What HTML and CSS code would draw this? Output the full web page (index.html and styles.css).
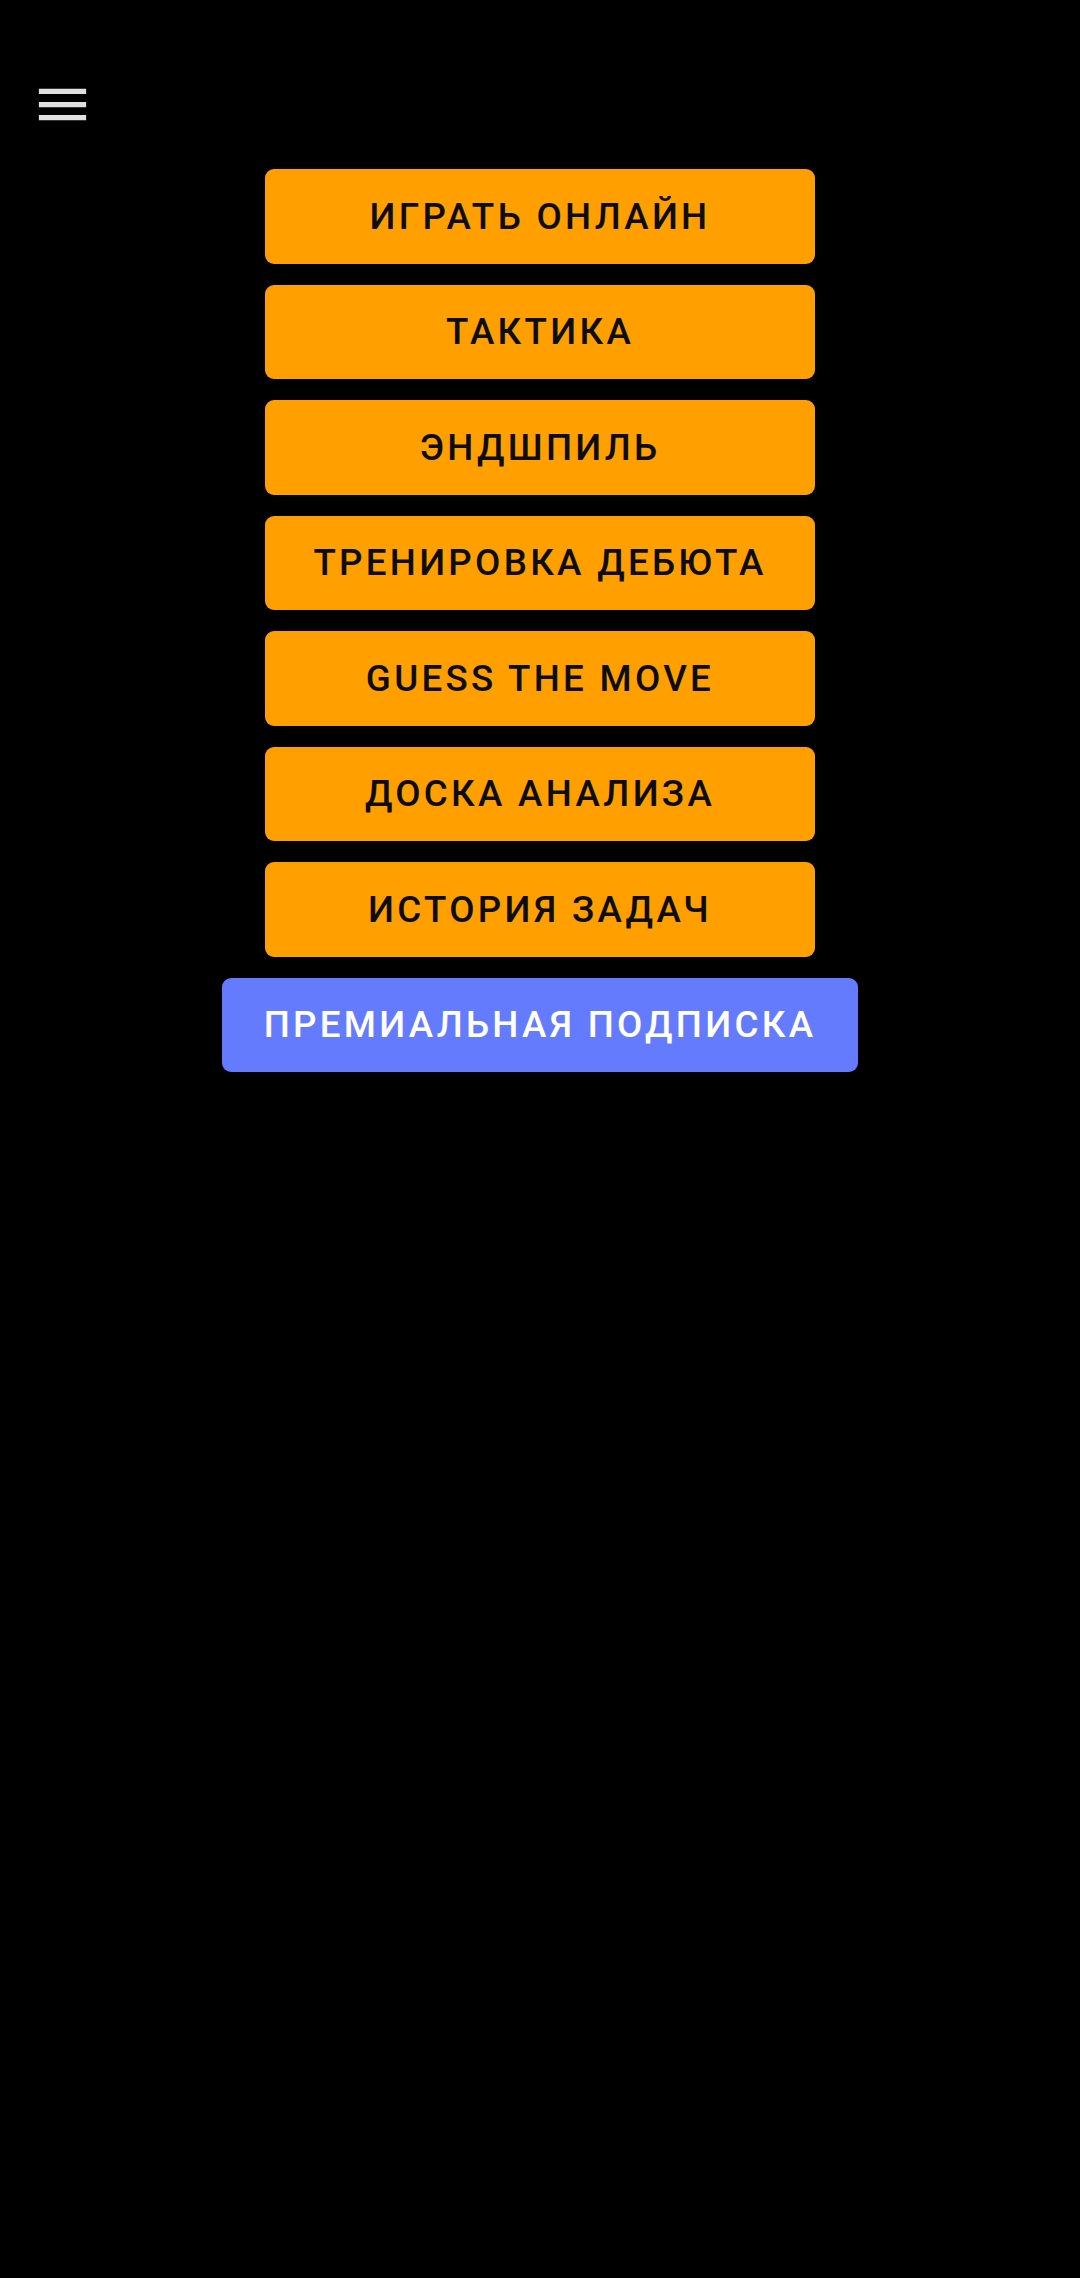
FILE: index.html
```html
<!DOCTYPE html>
<html lang="ru">
<head>
    <meta charset="UTF-8">
    <meta name="viewport" content="width=device-width, initial-scale=1.0">
    <title>Меню</title>
    <link rel="stylesheet" href="styles.css">
</head>
<body>
    <div class="header">
        <svg class="menu-icon" viewBox="0 0 24 24" width="63" height="63">
            <path d="M3 18h18v-2H3v2zm0-5h18v-2H3v2zm0-7v2h18V6H3z" fill="#e0e0e0"/>
        </svg>
    </div>

    <div class="menu">
        <button class="btn">Играть онлайн</button>
        <button class="btn">Тактика</button>
        <button class="btn">Эндшпиль</button>
        <button class="btn">Тренировка дебюта</button>
        <button class="btn">Guess the move</button>
        <button class="btn">Доска анализа</button>
        <button class="btn">История задач</button>
        <button class="btn premium">Премиальная подписка</button>
    </div>
</body>
</html>
```

FILE: styles.css
```css
body {
    margin: 0;
    background-color: #000;
    font-family: Roboto, "Noto Sans", sans-serif;
    min-height: 2278px;
}
.header {
    padding: 73px 0 0 31px;
    height: 63px;
}
.menu-icon {
    display: block;
}
.menu {
    display: flex;
    flex-direction: column;
    align-items: center;
    gap: 21px;
    margin-top: 33px;
}
.btn {
    width: 550px;
    height: 94.5px;
    border: none;
    border-radius: 9px;
    background-color: #ffa000;
    color: #0d0d0d;
    font-family: Roboto, "Noto Sans", sans-serif;
    font-size: 36.75px;
    font-weight: 500;
    letter-spacing: 0.089em;
    text-transform: uppercase;
    padding: 0;
    cursor: pointer;
}
.btn.premium {
    width: auto;
    padding: 0 42px;
    background-color: #647bfd;
    color: #fff;
}
```
